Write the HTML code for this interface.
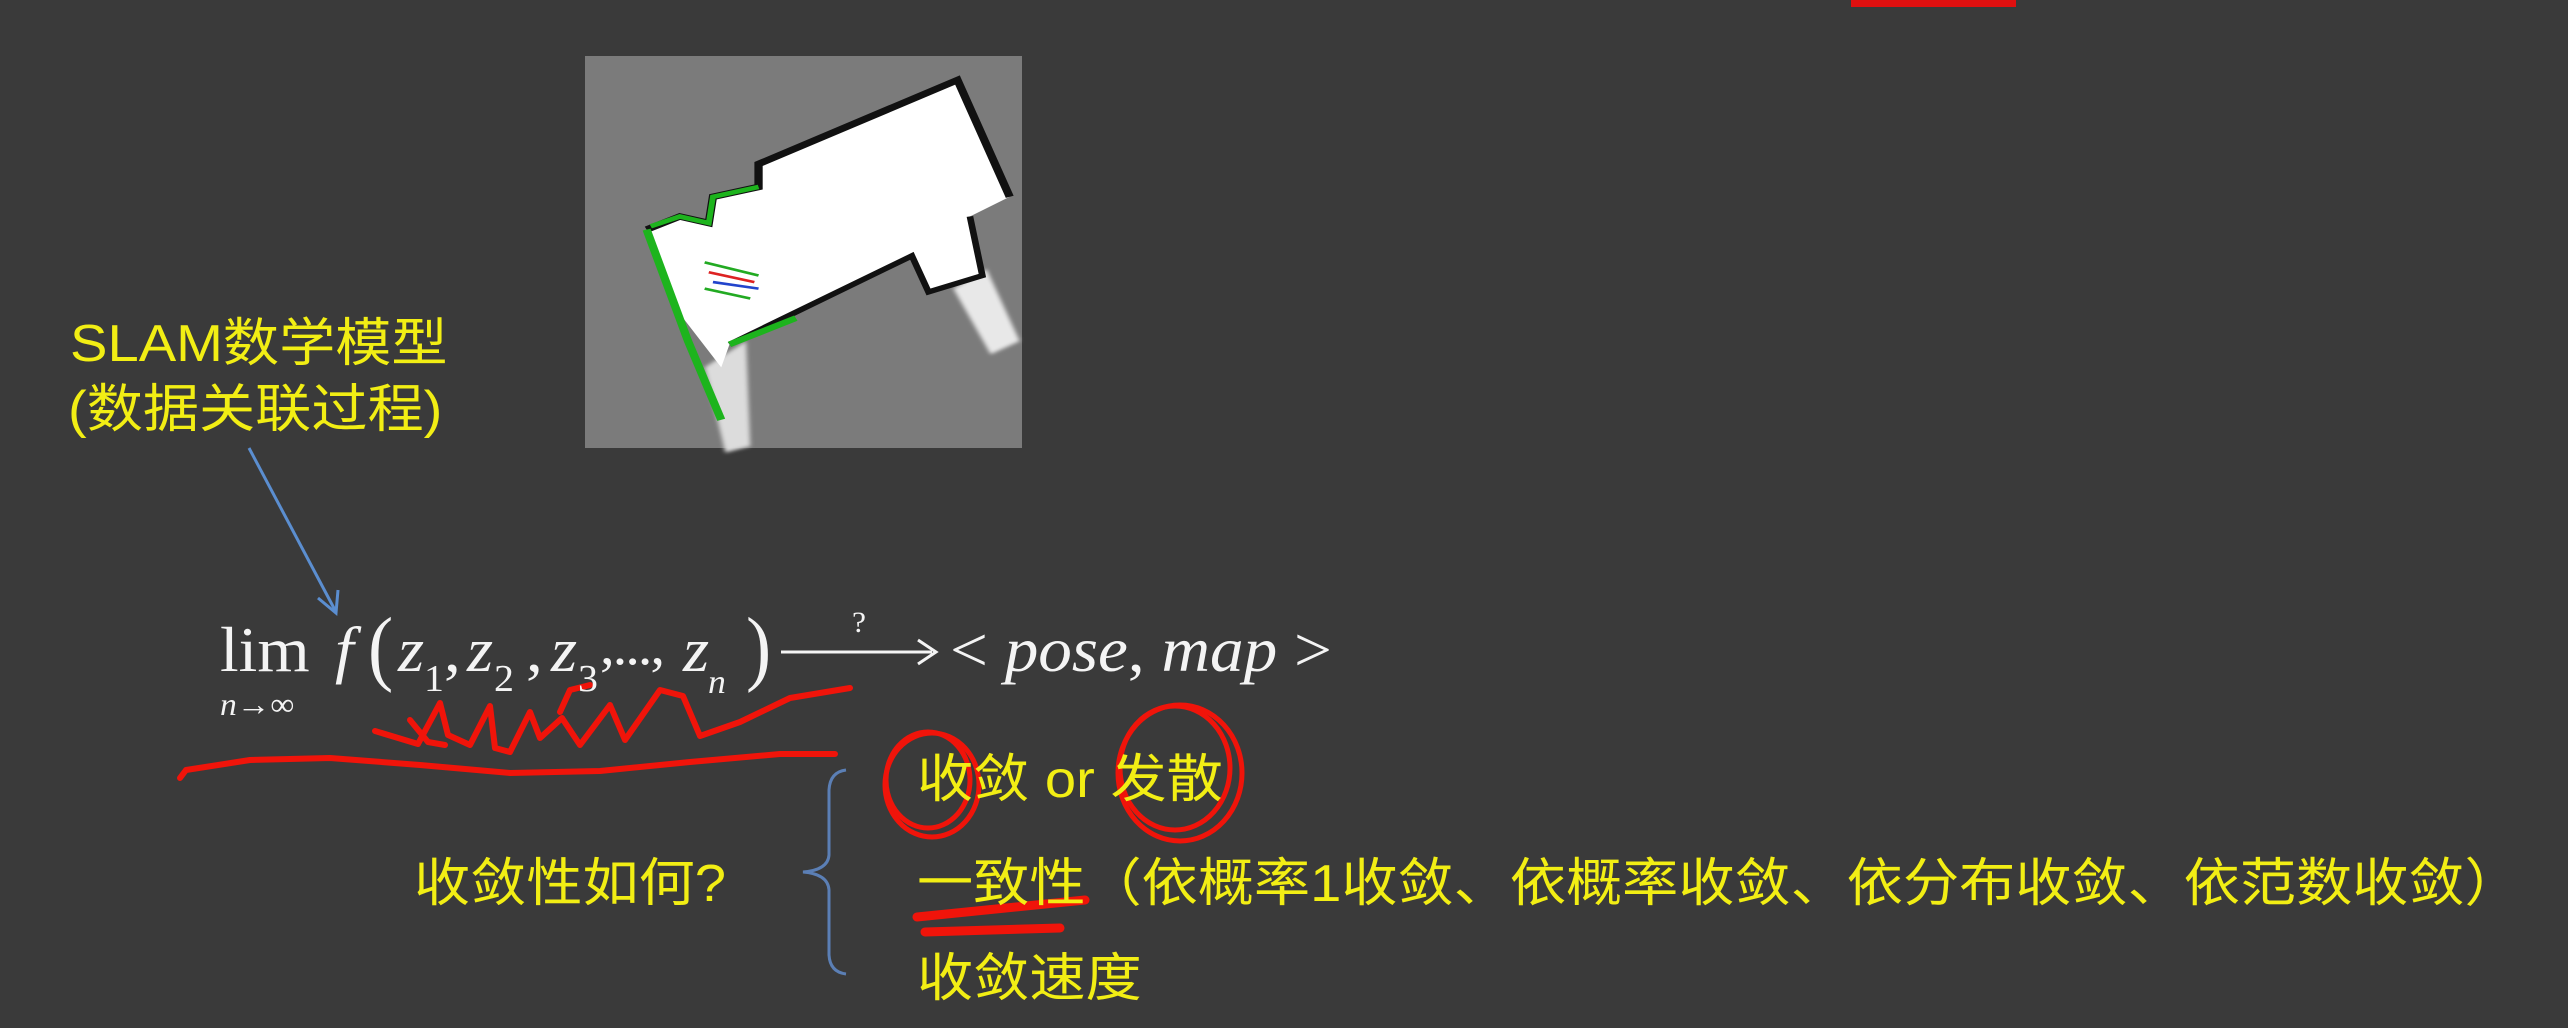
<!DOCTYPE html>
<html><head><meta charset="utf-8"><style>
html,body{margin:0;padding:0}
body{width:2568px;height:1028px;background:#3a3a3a;position:relative;overflow:hidden}
.t{position:absolute;white-space:nowrap;line-height:1;transform-origin:0 0;}
.y{color:#f2ee14;font-family:"Liberation Sans","Noto Sans CJK SC",sans-serif;font-size:52px;transform:scaleX(1.08)}
.m{color:#f4f4f4;font-family:"Liberation Serif",serif;font-size:64px;transform:scaleX(1.05)}
.i{font-style:italic}
svg{position:absolute;left:0;top:0}
</style></head><body>

<svg width="2568" height="1028">
  <defs><filter id="b"><feGaussianBlur stdDeviation="3"/></filter></defs>
  <rect x="585" y="56" width="437" height="392" fill="#7b7b7b"/>
  <g transform="scale(0.829,0.656)">
    <polygon points="900,520 905,680 875,690 850,560" fill="#dcdcdc" filter="url(#b)"/>
    <polygon points="1150,440 1195,540 1230,520 1190,410" fill="#e8e8e8" filter="url(#b)"/>
    <polygon points="915,250 1155,122 1218,300 1170,330 1185,420 1120,445 1100,390 880,525 870,560 815,470 780,350 820,330 855,340 860,300 915,285" fill="#ffffff"/>
    <polyline points="780,350 820,330 855,340 860,300 915,285 915,250 1155,122 1218,300" fill="none" stroke="#111" stroke-width="10"/>
    <polyline points="1170,330 1185,420 1120,445 1100,390 880,525" fill="none" stroke="#111" stroke-width="8"/>
    <polyline points="780,350 830,520 870,640" fill="none" stroke="#1db41d" stroke-width="10"/>
    <polyline points="785,345 820,330 855,340 860,300 915,285" fill="none" stroke="#1db41d" stroke-width="7"/>
    <polyline points="880,525 960,485" fill="none" stroke="#1db41d" stroke-width="9"/>
    <g stroke-width="4" fill="none">
      <path d="M850,400 L915,420" stroke="#22aa22"/>
      <path d="M855,415 L910,430" stroke="#dd2222"/>
      <path d="M860,430 L915,440" stroke="#2244cc"/>
      <path d="M850,440 L905,455" stroke="#22aa22"/>
    </g>
  </g>

  <line x1="249" y1="448" x2="336" y2="612" stroke="#5b8ed0" stroke-width="3"/>
  <polyline points="318,598 336,613 338,590" fill="none" stroke="#5b8ed0" stroke-width="3"/>

  <line x1="781" y1="652" x2="932" y2="652" stroke="#f4f4f4" stroke-width="3"/>
  <polyline points="918,640 936,652 918,664" fill="none" stroke="#f4f4f4" stroke-width="3"/>

  <path d="M846,770 Q830,772 829,790 L829,855 Q828,870 803,872 Q828,874 829,890 L829,955 Q830,972 846,974" fill="none" stroke="#5b7fb5" stroke-width="3"/>

  <g fill="none" stroke="#f0140a" stroke-width="6" stroke-linecap="round" stroke-linejoin="round">
    <polyline points="180,778 186,770 250,760 330,758 420,765 510,773 600,771 690,762 780,754 835,754"/>
    <polyline points="375,731 418,744 440,703 448,735 470,745 490,706 495,748 510,752 530,712 540,738 562,718 580,745 610,705 625,740 660,690 683,696 700,736 740,722 790,698 850,688"/>
    <polyline points="410,720 428,742 445,745"/>
    <polyline points="560,712 570,690 590,685"/>
  </g>
  <g fill="none" stroke="#f0140a" stroke-width="5">
    <ellipse cx="932" cy="785" rx="47" ry="52"/>
    <ellipse cx="928" cy="780" rx="42" ry="48"/>
    <ellipse cx="1180" cy="773" rx="62" ry="68"/>
    <ellipse cx="1175" cy="768" rx="55" ry="62"/>
  </g>
  <g fill="none" stroke="#f0140a" stroke-width="9" stroke-linecap="round">
    <line x1="917" y1="917" x2="1085" y2="900"/>
    <line x1="925" y1="932" x2="1060" y2="928"/>
  </g>
  <rect x="1851" y="0" width="165" height="7" fill="#e01010"/>
</svg>

<div class="t y" style="left:70px;top:318px">SLAM数学模型</div>
<div class="t y" style="left:68px;top:384px">(数据关联过程)</div>

<div class="t m" style="left:220px;top:618px">lim</div>
<div class="t m i" style="left:220px;top:688px;font-size:32px">n<span style="font-style:normal">→∞</span></div>
<div class="t m i" style="left:335px;top:618px">f</div>
<div class="t m" style="left:368px;top:606px;font-size:84px;transform:scaleX(0.9)">(</div>
<div class="t m i" style="left:398px;top:618px">z</div>
<div class="t m" style="left:424px;top:660px;font-size:38px">1</div>
<div class="t m" style="left:444px;top:618px">,</div>
<div class="t m i" style="left:467px;top:618px">z</div>
<div class="t m" style="left:494px;top:660px;font-size:38px">2</div>
<div class="t m" style="left:526px;top:618px">,</div>
<div class="t m i" style="left:551px;top:618px">z</div>
<div class="t m" style="left:578px;top:660px;font-size:38px">3</div>
<div class="t m" style="left:600px;top:618px;font-size:56px;letter-spacing:-2px">,...,</div>
<div class="t m i" style="left:683px;top:618px">z</div>
<div class="t m i" style="left:708px;top:666px;font-size:34px">n</div>
<div class="t m" style="left:746px;top:606px;font-size:84px;transform:scaleX(0.9)">)</div>
<div class="t m" style="left:852px;top:608px;font-size:30px">?</div>
<div class="t m" style="left:950px;top:618px">&lt; <span class="i">pose</span>, <span class="i">map</span> &gt;</div>

<div class="t y" style="left:917px;top:754px">收敛 or 发散</div>
<div class="t y" style="left:414px;top:858px">收敛性如何?</div>
<div class="t y" style="left:917px;top:858px">一致性（依概率1收敛、依概率收敛、依分布收敛、依范数收敛）</div>
<div class="t y" style="left:917px;top:953px">收敛速度</div>
</body></html>
